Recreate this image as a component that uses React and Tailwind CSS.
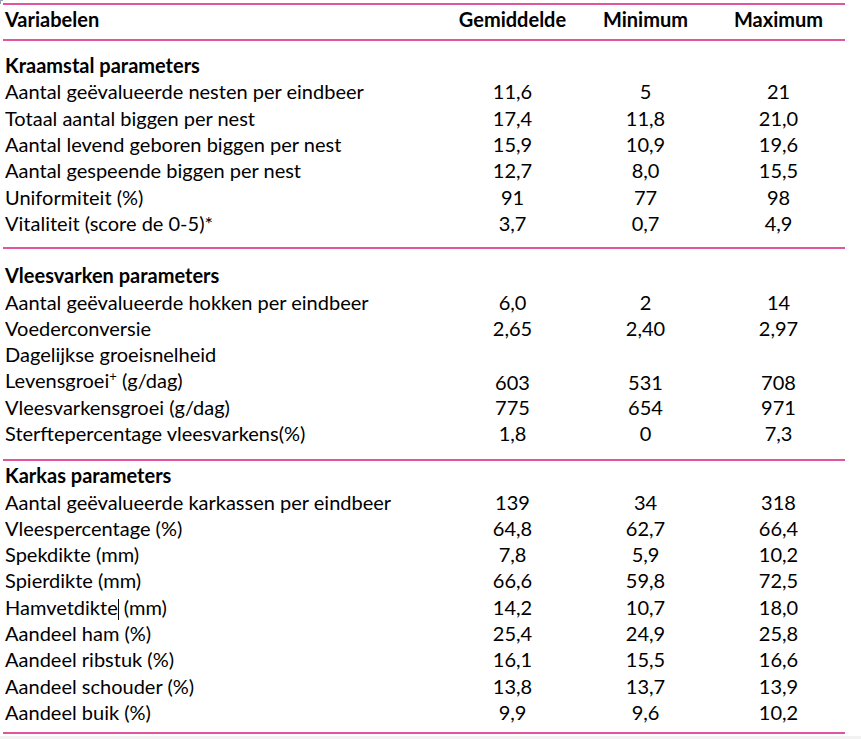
import React from 'react';

const cols = 'grid grid-cols-[443px_133px_133px_133px] items-center';

const sections = [
  {
    title: 'Kraamstal parameters',
    pad: 'pt-[11px] pb-[11px]',
    rows: [
      ['Aantal geëvalueerde nesten per eindbeer', '11,6', '5', '21'],
      ['Totaal aantal biggen per nest', '17,4', '11,8', '21,0'],
      ['Aantal levend geboren biggen per nest', '15,9', '10,9', '19,6'],
      ['Aantal gespeende biggen per nest', '12,7', '8,0', '15,5'],
      ['Uniformiteit (%)', '91', '77', '98'],
      ['Vitaliteit (score de 0-5)*', '3,7', '0,7', '4,9'],
    ],
  },
  {
    title: 'Vleesvarken parameters',
    pad: 'pt-[13px] pb-[13px]',
    rows: [
      ['Aantal geëvalueerde hokken per eindbeer', '6,0', '2', '14'],
      ['Voederconversie', '2,65', '2,40', '2,97'],
      ['Dagelijkse groeisnelheid', '', '', ''],
      [
        <>
          Levensgroei<span className="text-[13px] relative -top-[7px]">+</span> (g/dag)
        </>,
        '603',
        '531',
        '708',
      ],
      ['Vleesvarkensgroei (g/dag)', '775', '654', '971'],
      ['Sterftepercentage vleesvarkens(%)', '1,8', '0', '7,3'],
    ],
  },
  {
    title: 'Karkas parameters',
    pad: 'pt-[1px] pb-[7px]',
    rows: [
      ['Aantal geëvalueerde karkassen per eindbeer', '139', '34', '318'],
      ['Vleespercentage (%)', '64,8', '62,7', '66,4'],
      ['Spekdikte (mm)', '7,8', '5,9', '10,2'],
      ['Spierdikte (mm)', '66,6', '59,8', '72,5'],
      [
        <>
          Hamvetdikte<span className="inline-block w-px h-[21px] bg-black align-[-5px]" />
          {' '}(mm)
        </>,
        '14,2',
        '10,7',
        '18,0',
      ],
      ['Aandeel ham (%)', '25,4', '24,9', '25,8'],
      ['Aandeel ribstuk (%)', '16,1', '15,5', '16,6'],
      ['Aandeel schouder (%)', '13,8', '13,7', '13,9'],
      ['Aandeel buik (%)', '9,9', '9,6', '10,2'],
    ],
  },
];

function Row({ cells }) {
  return (
    <div className={`${cols} h-[26.3px]`}>
      <div className="pl-[2px] whitespace-nowrap">{cells[0]}</div>
      <div className="text-center">{cells[1]}</div>
      <div className="text-center">{cells[2]}</div>
      <div className="text-center">{cells[3]}</div>
    </div>
  );
}

export default function App() {
  return (
    <div className="w-[861px] h-[739px] bg-white text-black text-[20px] leading-[26px] font-['Lato',sans-serif] relative">
      <div className="absolute left-0 top-0 w-[3px] h-[4px] border-l border-t border-gray-400" />
      <div className="pt-[3px] pl-[3px]">
        <div className="w-[842px]">
          <div className="border-t-2 border-b-2 border-[#e0559f]">
            <div className={`${cols} h-[34px] font-bold pt-[1px] items-start`}>
              <div className="pl-[2px]">Variabelen</div>
              <div className="text-center">Gemiddelde</div>
              <div className="text-center">Minimum</div>
              <div className="text-center">Maximum</div>
            </div>
          </div>
          {sections.map((s) => (
            <div key={s.title} className={`${s.pad} border-b-2 border-[#e0559f]`}>
              <div className="h-[26.3px] flex items-center pl-[2px] font-bold">{s.title}</div>
              {s.rows.map((r, i) => (
                <Row key={i} cells={r} />
              ))}
            </div>
          ))}
        </div>
      </div>
      <div className="absolute left-0 bottom-0 w-full h-[3px] bg-[#f2f2f2]" />
    </div>
  );
}
